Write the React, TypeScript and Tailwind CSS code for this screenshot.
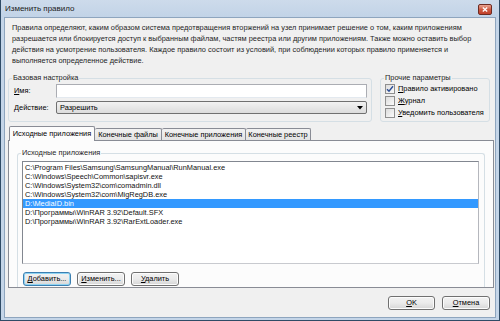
import React from 'react';

const font = "font-['Liberation_Sans',Arial,sans-serif]";

const Key = ({ c }: { c: string }) => <span className="underline underline-offset-[1px]">{c}</span>;

function GroupBox({ title, className, children }: { title: string; className?: string; children?: React.ReactNode }) {
  return (
    <div className={`relative border border-[#d5dfe5] rounded-[3px] ${className ?? ''}`}>
      <span className="absolute -top-[6px] left-[3px] px-[1px] bg-inherit leading-[10px] text-[#1e1e1e] whitespace-nowrap">{title}</span>
      {children}
    </div>
  );
}

function Checkbox({ checked, children }: { checked?: boolean; children: React.ReactNode }) {
  return (
    <div className="flex items-center gap-[3px] h-[12px] whitespace-nowrap">
      <div className="w-[10px] h-[10px] shrink-0 border border-[#8f8f8f] bg-gradient-to-br from-[#dcdcdc] to-[#fbfbfb] flex items-center justify-center">
        {checked && (
          <svg width="8" height="8" viewBox="0 0 8 8">
            <path d="M1 4.2 L3 6.3 L7 1.2" fill="none" stroke="#2c4e96" strokeWidth="1.4" />
          </svg>
        )}
      </div>
      <span>{children}</span>
    </div>
  );
}

function Button({ children, primary, className }: { children: React.ReactNode; primary?: boolean; className?: string }) {
  return (
    <div
      className={`flex items-center justify-center whitespace-nowrap rounded-[3px] border bg-gradient-to-b from-[#f2f2f2] via-[#ebebeb] to-[#d6d6d6] ${
        primary ? 'border-[#3c7fb1] shadow-[inset_0_0_0_1px_#8ed4f3]' : 'border-[#707070] shadow-[inset_0_0_0_1px_#fcfcfc]'
      } ${className ?? ''}`}
    >
      {children}
    </div>
  );
}

const files = [
  'C:\\Program Files\\Samsung\\SamsungManual\\RunManual.exe',
  'C:\\Windows\\Speech\\Common\\sapisvr.exe',
  'C:\\Windows\\System32\\com\\comadmin.dll',
  'C:\\Windows\\System32\\com\\MigRegDB.exe',
  'D:\\MediaID.bin',
  'D:\\Программы\\WinRAR 3.92\\Default.SFX',
  'D:\\Программы\\WinRAR 3.92\\RarExtLoader.exe',
];

const tabs = [
  { label: 'Конечные файлы', w: 'w-[67px]' },
  { label: 'Конечные приложения', w: 'w-[84px]' },
  { label: 'Конечные реестр', w: 'w-[65px]' },
];

export default function App() {
  return (
    <div className={`w-[500px] h-[321px] flex flex-col bg-[#c4d5e8] border-x border-b border-[#2f4b66] text-[7.4px] text-black ${font}`}>
      {/* title bar */}
      <div className="h-[17px] flex items-center justify-between pl-[4px] pr-[7px] bg-gradient-to-b from-[#cddbeb] to-[#c2d3e7]">
        <span className="text-[8px] text-[#1b1b1b]">Изменить правило</span>
        <div className="w-[14px] h-[11px] mt-[1px] rounded-[2px] border border-[#6d2b22] bg-gradient-to-b from-[#e8a493] via-[#cf5a42] to-[#c0402a] flex items-center justify-center">
          <svg width="6" height="5" viewBox="0 0 6 5">
            <path d="M0.8 0.5 L5.2 4.5 M5.2 0.5 L0.8 4.5" stroke="#fff" strokeWidth="1.3" />
          </svg>
        </div>
      </div>

      {/* body */}
      <div className="flex-1 mx-[3px] mb-[2px] bg-[#f0f0f0] border border-[#8ea5be] flex flex-col">
        <p className="pt-[4px] pl-[7px] leading-[11px] text-[#1e1e1e] whitespace-nowrap">
          Правила определяют, каким образом система предотвращения вторжений на узел принимает решение о том, каким приложениям
          <br />
          разрешается или блокируется доступ к выбранным файлам, частям реестра или другим приложениям. Также можно оставить выбор
          <br />
          действия на усмотрение пользователя. Каждое правило состоит из условий, при соблюдении которых правило применяется и
          <br />
          выполняется определенное действие.
        </p>

        <div className="flex mt-[12px] ml-[3px] gap-[8px]">
          <GroupBox title="Базовая настройка" className="w-[364px] h-[44px] bg-[#f0f0f0]">
            <div className="flex flex-col gap-[3px] pt-[5px]">
              <div className="flex items-center h-[14px]">
                <span className="w-[47px] pl-[5px]"><Key c="И" />мя:</span>
                <div className="w-[311px] h-[14px] bg-white border border-[#abadb3] border-b-[#e3e9ef]" />
              </div>
              <div className="flex items-center h-[13px]">
                <span className="w-[47px] pl-[5px]"><Key c="Д" />ействие:</span>
                <div className="w-[311px] h-[13px] rounded-[2px] border border-[#707070] bg-gradient-to-b from-[#f2f2f2] to-[#dcdcdc] flex items-center justify-between pl-[3px] pr-[3px]">
                  <span>Разрешить</span>
                  <svg width="6" height="4" viewBox="0 0 6 4"><path d="M0 0 H6 L3 3.5 Z" fill="#000" /></svg>
                </div>
              </div>
            </div>
          </GroupBox>
          <GroupBox title="Прочие параметры" className="w-[110px] h-[44px] bg-[#f0f0f0]">
            <div className="flex flex-col pt-[4px] pl-[4px]">
              <Checkbox checked>
                <Key c="П" />равило активировано
              </Checkbox>
              <Checkbox>
                <Key c="Ж" />урнал
              </Checkbox>
              <Checkbox>
                <Key c="У" />ведомить пользователя
              </Checkbox>
            </div>
          </GroupBox>
        </div>

        {/* tabs */}
        <div className="flex items-end mt-[4px] ml-[4px] h-[14px] relative z-10 whitespace-nowrap">
          <div className="h-[15px] w-[86px] -mb-[1px] bg-[#fcfcfc] border border-b-0 border-[#898c95] rounded-t-[2px] flex items-center justify-center">
            Исходные приложения
          </div>
          {tabs.map((t) => (
            <div
              key={t.label}
              className={`h-[12px] ${t.w} border border-l-0 border-b-0 border-[#898c95] rounded-t-[2px] bg-gradient-to-b from-[#f2f2f2] to-[#e3e3e3] flex items-center justify-center`}
            >
              {t.label}
            </div>
          ))}
        </div>
        <div className="ml-[3px] mr-[1px] h-[148px] bg-[#fcfcfc] border border-[#898c95] pt-[12px] px-[8px]">
          <GroupBox title="Исходные приложения" className="h-[134px] bg-[#fcfcfc] border-b-0 rounded-b-none">
            <div className="mt-[7px] ml-[4px] mr-[5px] h-[103px] bg-white border border-[#828790] border-r-[#b5b7bd] border-b-[#c8cacf] pt-[1px]">
              {files.map((f, i) => (
                <div
                  key={f}
                  className={`h-[9px] leading-[9px] pl-[2px] whitespace-nowrap ${i === 4 ? 'bg-[#3399ff] text-white' : 'text-[#111]'}`}
                >
                  {f}
                </div>
              ))}
            </div>
            <div className="flex gap-[6px] mt-[8px] ml-[5px]">
              <Button primary className="w-[48px] h-[14px]">
                <span><Key c="Д" />обавить...</span>
              </Button>
              <Button className="w-[48px] h-[14px]">
                <span><Key c="И" />зменить...</span>
              </Button>
              <Button className="w-[48px] h-[14px]">
                <span><Key c="У" />далить</span>
              </Button>
            </div>
          </GroupBox>
        </div>

        <div className="flex justify-end gap-[7px] mt-[8px] mr-[5px]">
          <Button className="w-[47px] h-[14px]">
            <span><Key c="O" />K</span>
          </Button>
          <Button className="w-[48px] h-[14px]">
            <span><Key c="О" />тмена</span>
          </Button>
        </div>
      </div>
    </div>
  );
}
